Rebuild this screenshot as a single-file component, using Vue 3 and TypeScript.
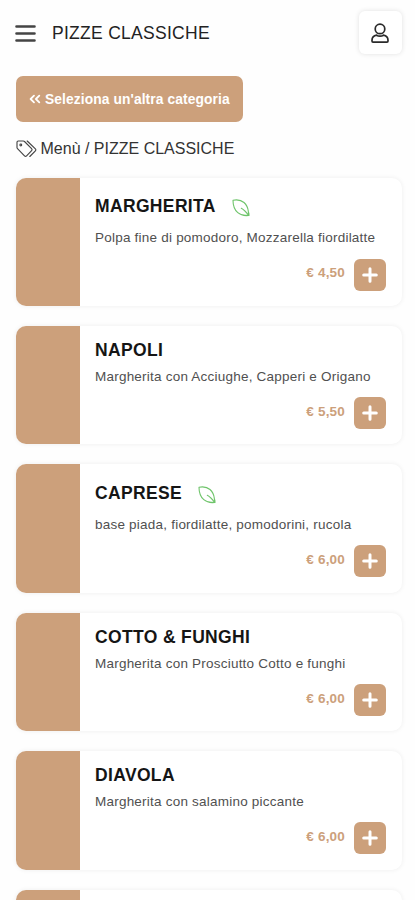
<script setup lang="ts">
interface Pizza {
  name: string
  description: string
  price: string
  vegetarian?: boolean
}

const category = 'PIZZE CLASSICHE'

const pizzas: Pizza[] = [
  { name: 'MARGHERITA', description: 'Polpa fine di pomodoro, Mozzarella fiordilatte', price: '€ 4,50', vegetarian: true },
  { name: 'NAPOLI', description: 'Margherita con Acciughe, Capperi e Origano', price: '€ 5,50' },
  { name: 'CAPRESE', description: 'base piada, fiordilatte, pomodorini, rucola', price: '€ 6,00', vegetarian: true },
  { name: 'COTTO & FUNGHI', description: 'Margherita con Prosciutto Cotto e funghi', price: '€ 6,00' },
  { name: 'DIAVOLA', description: 'Margherita con salamino piccante', price: '€ 6,00' },
]
</script>

<template>
  <div class="screen">
    <header class="topbar">
      <button class="menu" aria-label="Menu">
        <svg width="20" height="18" viewBox="0 0 20 18">
          <path d="M.5 2.500h18M.5 9.500h18M.5 16.500h18" stroke="#444" stroke-width="2.600" stroke-linecap="round" />
        </svg>
      </button>
      <h1 class="heading">{{ category }}</h1>
      <button class="account" aria-label="Account">
        <svg width="18" height="20" viewBox="0 0 18 20" fill="none" stroke="#2b2b2b" stroke-width="1.700">
          <circle cx="9" cy="5.900" r="4.800" />
          <path d="M5.600 12.200C2.800 12.700 1 14.500 1 17.200v.9c0 .6.4 1 1 1h14c.6 0 1-.4 1-1v-.9c0-2.700-1.800-4.500-4.600-5-1 .7-2.100 1-3.400 1s-2.400-.3-3.400-1z" />
        </svg>
      </button>
    </header>

    <button class="back">
      <svg width="12" height="10" viewBox="0 0 12 10" fill="none" stroke="#fff" stroke-width="1.800" stroke-linecap="round" stroke-linejoin="round">
        <path d="M5 1.700 1.600 5 5 8.300M10.300 1.700 6.900 5l3.400 3.300" />
      </svg>
      <span>Seleziona un'altra categoria</span>
    </button>

    <nav class="crumbs">
      <svg width="21" height="18" viewBox="0 0 21 18" fill="none" stroke="#444" stroke-width="1.150" stroke-linejoin="round" stroke-linecap="round">
        <path d="M1 2.200v5.200c0 .5.2.9.5 1.200l7 7.200c.6.600 1.500.600 2.100 0l5-5.100c.6-.6.6-1.500 0-2.100L8.500 1.500C8.200 1.200 7.800 1 7.300 1H2.200C1.500 1 1 1.500 1 2.200z" />
        <path d="m11.200 1 8.200 7.800c.6.600.6 1.500 0 2.100l-5.600 5.600" />
        <circle cx="4.800" cy="4.900" r=".9" />
      </svg>
      <span>Menù / {{ category }}</span>
    </nav>

    <main class="list">
      <article v-for="pizza in pizzas" :key="pizza.name" class="card" :class="{ tall: pizza.vegetarian }">
        <div class="photo"></div>
        <div class="body">
          <h2 class="name">
            <span>{{ pizza.name }}</span>
            <svg v-if="pizza.vegetarian" class="leaf" width="18" height="18" viewBox="0 0 18 18" fill="none" stroke="#6fc46b" stroke-width="1.100" stroke-linecap="round" stroke-linejoin="round">
              <path d="M1 1.200C5.200.4 9.200 1 12 3.500c3.200 2.900 4 6 4.300 8.600l.5 4.400c-4.200.5-8-.2-11-2.800C2.200 10.600 1 6.700 1 1.200z" />
              <path d="M9.300 9.300c2.600 1.400 5 3.900 7.500 7.200M13.800 16.200l3-.100v-2.400" />
            </svg>
          </h2>
          <p class="description">{{ pizza.description }}</p>
          <div class="purchase">
            <span class="price">{{ pizza.price }}</span>
            <button class="add" aria-label="Aggiungi">
              <svg width="16" height="16" viewBox="0 0 16 16">
                <path d="M8 1.700v12.600M1.700 8h12.600" stroke="#fff" stroke-width="3" stroke-linecap="round" />
              </svg>
            </button>
          </div>
        </div>
      </article>
      <article class="card">
        <div class="photo"></div>
      </article>
    </main>
  </div>
</template>

<style>
body {
  background: #fefefe;
}
</style>

<style scoped>
.screen {
  box-sizing: border-box;
  height: 900px;
  overflow: hidden;
  padding: 11px 13.500px 0 15.500px;
  font-family: "Liberation Sans", Arial, sans-serif;
  color: #222;
}
button {
  border: 0;
  padding: 0;
  font-family: inherit;
}
svg {
  display: block;
  flex: none;
  overflow: visible;
}
.topbar {
  display: flex;
  align-items: center;
  height: 43px;
}
.menu {
  background: none;
}
.heading {
  flex: 1;
  margin: 1px 0 0 16.500px;
  font-size: 17.500px;
  font-weight: 400;
  line-height: 22px;
  letter-spacing: 0.280px;
}
.account {
  display: flex;
  align-items: center;
  justify-content: center;
  width: 43px;
  height: 43px;
  border-radius: 6px;
  background: #fff;
  box-shadow: 0 0 5px rgba(0, 0, 0, 0.12);
}
.back {
  display: flex;
  align-items: center;
  gap: 4.500px;
  width: 227.500px;
  height: 46px;
  margin-top: 22px;
  padding-left: 13px;
  border-radius: 7px;
  background: #cca07b;
  color: #fff;
  font-size: 13.800px;
  font-weight: 700;
  letter-spacing: 0.100px;
  white-space: nowrap;
}
.crumbs {
  display: flex;
  align-items: center;
  gap: 4px;
  height: 20px;
  margin-top: 16.500px;
  font-size: 16px;
  color: #333;
  white-space: nowrap;
}
.list {
  display: flex;
  flex-direction: column;
  gap: 20.200px;
  margin-top: 19px;
}
.card {
  display: flex;
  flex: none;
  width: 386px;
  height: 118.200px;
  border-radius: 10px;
  overflow: hidden;
  background: #fff;
  box-shadow: 0 0 5px rgba(0, 0, 0, 0.07);
}
.tall {
  height: 128.400px;
}
.photo {
  width: 64px;
  background: #cca07b;
}
.body {
  display: flex;
  flex: 1;
  flex-direction: column;
  padding: 13px 16px 0 15.500px;
}
.name {
  display: flex;
  align-items: center;
  gap: 16px;
  height: 22px;
  margin: 0;
  font-size: 17.500px;
  font-weight: 700;
  letter-spacing: 0.350px;
  color: #151515;
  white-space: nowrap;
}
.leaf {
  margin-top: 3px;
}
.tall .name {
  height: 32px;
}
.description {
  margin: 5.500px 0 0;
  font-size: 13.500px;
  line-height: 20px;
  letter-spacing: 0.220px;
  color: #505050;
  white-space: nowrap;
}
.purchase {
  display: flex;
  align-items: center;
  justify-content: flex-end;
  gap: 8.500px;
  margin-top: 10.500px;
}
.price {
  margin-top: -4px;
  font-size: 13.500px;
  font-weight: 700;
  letter-spacing: 0.200px;
  color: #cca07b;
}
.add {
  display: flex;
  align-items: center;
  justify-content: center;
  width: 32px;
  height: 32px;
  border-radius: 6px;
  background: #cca07b;
}
</style>
